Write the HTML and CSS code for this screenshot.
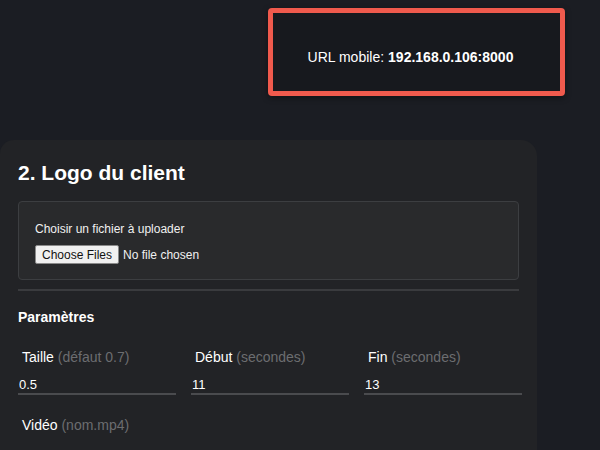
FILE: index.html
```html
<!DOCTYPE html>
<html lang="fr">
<head>
<meta charset="utf-8">
<title>Logo du client</title>
<link rel="stylesheet" href="styles.css">
</head>
<body>
  <header class="topbar">
    <div class="url-box">URL mobile: <strong>192.168.0.106:8000</strong></div>
  </header>
  <section class="card">
    <h2 class="card-title">2. Logo du client</h2>
    <div class="upload">
      <label class="upload-label" for="files">Choisir un fichier à uploader</label>
      <input class="upload-input" id="files" type="file" multiple>
    </div>
    <hr class="sep">
    <h3 class="params-title">Paramètres</h3>
    <div class="fields">
      <div class="field">
        <label class="field-label">Taille <span class="hint">(défaut 0.7)</span></label>
        <input class="field-input" type="text" value="0.5">
      </div>
      <div class="field">
        <label class="field-label">Début <span class="hint">(secondes)</span></label>
        <input class="field-input" type="text" value="11">
      </div>
      <div class="field">
        <label class="field-label">Fin <span class="hint">(secondes)</span></label>
        <input class="field-input" type="text" value="13">
      </div>
      <div class="field">
        <label class="field-label">Vidéo <span class="hint">(nom.mp4)</span></label>
      </div>
    </div>
  </section>
</body>
</html>
```
FILE: styles.css
```css
html, body {
  margin: 0;
  padding: 0;
  background: #1b1d23;
  font-family: "Liberation Sans", Arial, sans-serif;
  color: #f2f2f2;
  height: 100%;
  overflow: hidden;
}

.topbar {
  display: flex;
  justify-content: flex-end;
  padding: 8px 35px 0 0;
}

.url-box {
  box-sizing: border-box;
  width: 297px;
  height: 88px;
  border: 5px solid #f05a4d;
  border-radius: 4px;
  background: #17191e;
  display: flex;
  align-items: center;
  justify-content: center;
  font-size: 14px;
  color: #ffffff;
  padding-top: 10px;
  padding-right: 12px;
  box-shadow: 0 2px 6px rgba(0,0,0,0.4);
}

.url-box strong {
  font-weight: bold;
  margin-left: 4px;
}

.card {
  box-sizing: border-box;
  width: 537px;
  margin-top: 44px;
  background: #222326;
  border-radius: 14px 16px 16px 0;
  padding: 18px 18px 40px 18px;
}

.card-title {
  margin: 0;
  font-size: 21px;
  line-height: 30px;
  font-weight: bold;
  color: #ffffff;
}

.upload {
  margin-top: 13px;
  border: 1px solid #3c3e41;
  border-radius: 4px;
  background: #292a2c;
  padding: 20px 16px 15px 16px;
  display: flex;
  flex-direction: column;
  align-items: flex-start;
  gap: 9px;
}

.upload-label {
  font-size: 12px;
  line-height: 14px;
  color: #f0f0f0;
}

.upload-input {
  font-family: "Liberation Sans", Arial, sans-serif;
  font-size: 12px;
  color: #f0f0f0;
}

.upload-input::file-selector-button {
  font-family: "Liberation Sans", Arial, sans-serif;
  font-size: 12px;
  height: 19px;
  padding: 0 6px;
  margin-right: 4px;
  background: #f0f0f0;
  color: #111;
  border: 1px solid #8a8a8a;
  border-radius: 2px;
}

.sep {
  margin: 9px 0 0 0;
  border: 0;
  height: 2px;
  background: #3a3b3e;
}

.params-title {
  margin: 18px 0 0 0;
  font-size: 14px;
  line-height: 16px;
  font-weight: bold;
  color: #ffffff;
}

.fields {
  margin-top: 24px;
  display: grid;
  grid-template-columns: repeat(3, 158px);
  column-gap: 15px;
  row-gap: 22px;
}

.field {
  display: flex;
  flex-direction: column;
  gap: 10px;
}

.field-label {
  padding-left: 4px;
  font-size: 14px;
  line-height: 16px;
  color: #ffffff;
}

.hint {
  color: #6c6d70;
}

.field-input {
  box-sizing: border-box;
  width: 100%;
  height: 20px;
  padding: 0 1px;
  background: transparent;
  border: 0;
  border-bottom: 2px solid #4a4b4e;
  color: #ffffff;
  font-family: "Liberation Sans", Arial, sans-serif;
  font-size: 13px;
  outline: none;
}
```
